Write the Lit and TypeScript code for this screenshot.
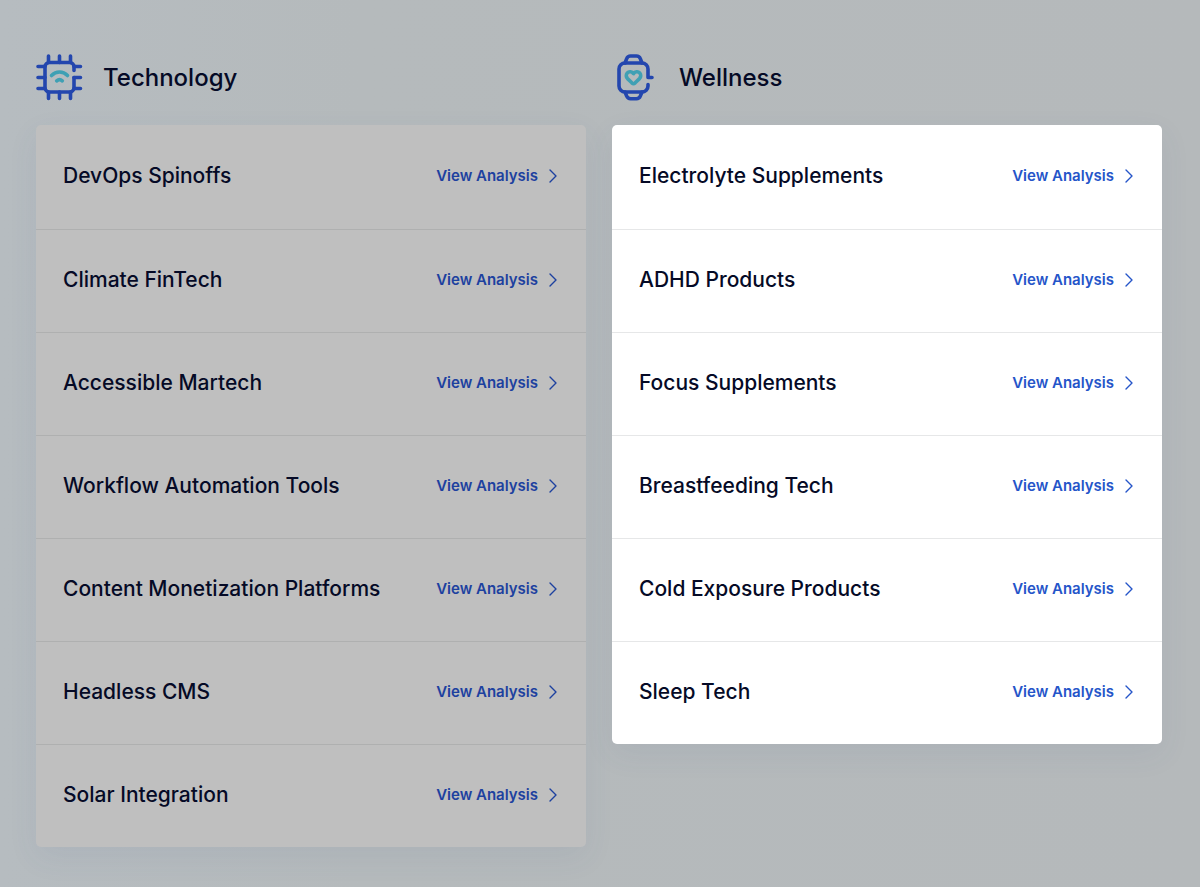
import { LitElement, html, svg, css } from "lit";
import { customElement, property } from "lit/decorators.js";

const chipIcon = svg`
  <g stroke="#2346ae">
    <path d="M38 16.5V13a4.5 4.5 0 0 0-4.5-4.5h-20A4.5 4.5 0 0 0 9 13v20.500a4.500 4.500 0 0 0 4.500 4.500h20a4.500 4.500 0 0 0 4.500-4.500V23.500"/>
    <path d="M12.500 8.500V2M23.500 8.500V2M34.500 8.500V2M12.500 38v6.500M23.500 38v6.500M34.500 38v6.500"/>
    <path d="M9 12.500H2M9 23.500H2M9 34.500H2M38 12.500h6.500M38 23.500h6.500M38 34.500h6.500"/>
  </g>
  <g stroke="#3fa0b4">
    <path d="M15.500 21.500c4.500-4.700 11.500-4.700 16 0"/>
    <path d="M20.700 26.800c1.700-1.500 3.900-1.500 5.600 0"/>
  </g>`;

const watchIcon = svg`
  <g stroke="#2346ae">
    <path d="M40 23.500h-4V15a6 6 0 0 0-6-6H13a6 6 0 0 0-6 6v17a6 6 0 0 0 6 6h17a6 6 0 0 0 6-6v-1.500"/>
    <path d="M13 9l1.700-4.400A4.200 4.200 0 0 1 18.600 2h5.800a4.200 4.200 0 0 1 3.900 2.600L30 9"/>
    <path d="M13 38l1.700 4.100a4.200 4.200 0 0 0 3.900 2.600h5.800a4.200 4.200 0 0 0 3.900-2.600L30 38"/>
  </g>
  <path stroke="#3fa0b4" d="M21.500 19.600c-1.600-2.200-4.600-2.500-6.200-.7-1.500 1.700-1.300 4.100.2 5.700l4.300 4.200c1 .9 2.400.9 3.400 0l4.300-4.200c1.500-1.600 1.700-4 .2-5.700-1.600-1.800-4.600-1.500-6.200.7z"/>`;

@customElement("topic-group")
export class TopicGroup extends LitElement {
  @property() heading = "";
  @property({ attribute: false }) icon: unknown = null;
  @property({ attribute: false }) topics: string[] = [];
  @property({ type: Boolean, reflect: true }) highlighted = false;

  static styles = css`
    :host {
      display: block;
      --surface: #bfbfbf;
      --line: #afb0b0;
      --link: #1d419f;
      --shadow: 0 10px 30px rgba(70, 90, 140, 0.08);
    }
    :host([highlighted]) {
      --surface: #ffffff;
      --line: #e6e7e8;
      --link: #2555c9;
    }
    .header {
      display: flex;
      align-items: center;
      gap: 20px;
      margin-bottom: 24px;
    }
    .icon {
      width: 47px;
      height: 47px;
      flex: none;
      fill: none;
      stroke-width: 3.6;
      stroke-linecap: round;
      stroke-linejoin: round;
    }
    .title {
      margin: 0;
      font-size: 24px;
      line-height: 32px;
      font-weight: 500;
    }
    .card {
      list-style: none;
      margin: 0;
      padding: 1px 0 0;
      background: var(--surface);
      border-radius: 5px;
      box-shadow: var(--shadow);
    }
    .row {
      box-sizing: border-box;
      min-height: 103px;
      padding: 0 28px 3px 27px;
      display: flex;
      align-items: center;
      justify-content: space-between;
      gap: 16px;
    }
    .row + .row {
      border-top: 1px solid var(--line);
    }
    .name {
      margin: 0;
      font-size: 21px;
      line-height: 28px;
      font-weight: 500;
    }
    .link {
      display: flex;
      align-items: center;
      gap: 10px;
      flex: none;
      color: var(--link);
      font-size: 15px;
      line-height: 20px;
      font-weight: 600;
      text-decoration: none;
    }
    .link:hover {
      text-decoration: underline;
    }
    .chevron {
      width: 10px;
      height: 14px;
      fill: none;
      stroke: currentColor;
      stroke-width: 1.4;
      stroke-linecap: round;
      stroke-linejoin: round;
    }
  `;

  render() {
    return html`
      <header class="header">
        <svg class="icon" viewBox="0 0 47 47" aria-hidden="true">${this.icon}</svg>
        <h2 class="title">${this.heading}</h2>
      </header>
      <ul class="card">
        ${this.topics.map(
          (topic) => html`
            <li class="row">
              <h3 class="name">${topic}</h3>
              <a class="link" href="#" aria-label="View Analysis: ${topic}">
                <span>View Analysis</span>
                <svg class="chevron" viewBox="0 0 10 14" aria-hidden="true">
                  <path d="M2 1l6 6-6 6" />
                </svg>
              </a>
            </li>
          `
        )}
      </ul>
    `;
  }
}

@customElement("app-root")
export class AppRoot extends LitElement {
  static styles = css`
    :host {
      display: block;
      box-sizing: border-box;
      min-height: 100vh;
      padding: 54px 38px 40px 36px;
      background: linear-gradient(90deg, #b6bcc0 0%, #b5babc 30%, #b5b9bb 100%);
      color: #050a26;
      font-family: Inter, "Liberation Sans", sans-serif;
    }
    .groups {
      display: grid;
      grid-template-columns: repeat(2, minmax(0, 1fr));
      gap: 26px;
      align-items: start;
    }
  `;

  render() {
    return html`
      <main class="groups">
        <topic-group
          heading="Technology"
          .icon=${chipIcon}
          .topics=${[
            "DevOps Spinoffs",
            "Climate FinTech",
            "Accessible Martech",
            "Workflow Automation Tools",
            "Content Monetization Platforms",
            "Headless CMS",
            "Solar Integration",
          ]}
        ></topic-group>
        <topic-group
          highlighted
          heading="Wellness"
          .icon=${watchIcon}
          .topics=${[
            "Electrolyte Supplements",
            "ADHD Products",
            "Focus Supplements",
            "Breastfeeding Tech",
            "Cold Exposure Products",
            "Sleep Tech",
          ]}
        ></topic-group>
      </main>
    `;
  }
}
